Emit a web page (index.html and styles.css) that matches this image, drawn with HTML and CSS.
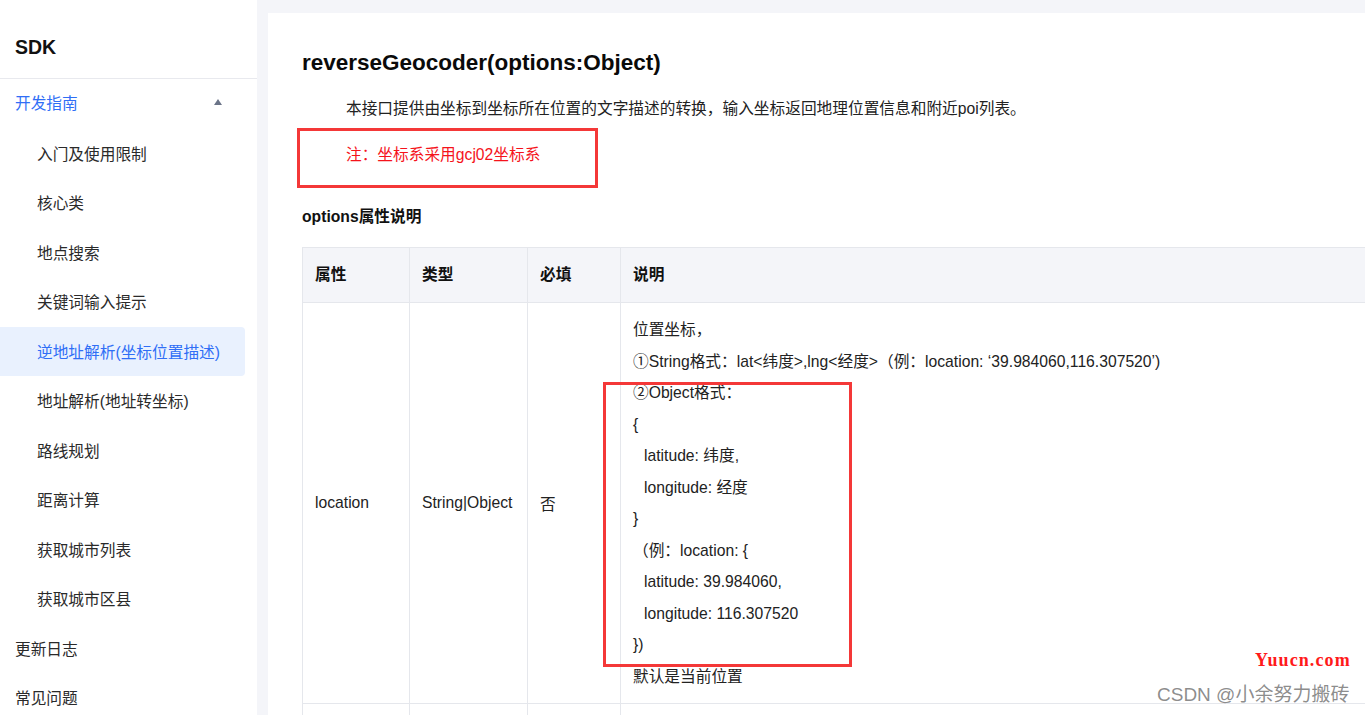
FILE: index.html
```html
<!DOCTYPE html>
<html lang="zh-CN">
<head>
<meta charset="utf-8">
<title>reverseGeocoder</title>
<link rel="stylesheet" href="styles.css">
</head>
<body>
<div class="layout">
  <aside class="sidebar">
    <div class="brand">SDK</div>
    <ul class="menu">
      <li class="item top open"><span>开发指南</span><span class="caret"></span></li>
      <li class="item sub">入门及使用限制</li>
      <li class="item sub">核心类</li>
      <li class="item sub">地点搜索</li>
      <li class="item sub">关键词输入提示</li>
      <li class="item sub active">逆地址解析(坐标位置描述)</li>
      <li class="item sub">地址解析(地址转坐标)</li>
      <li class="item sub">路线规划</li>
      <li class="item sub">距离计算</li>
      <li class="item sub">获取城市列表</li>
      <li class="item sub">获取城市区县</li>
      <li class="item top">更新日志</li>
      <li class="item top">常见问题</li>
    </ul>
  </aside>
  <main class="main">
    <div class="panel">
      <h1 class="title">reverseGeocoder(options:Object)</h1>
      <p class="desc">本接口提供由坐标到坐标所在位置的文字描述的转换，输入坐标返回地理位置信息和附近poi列表。</p>
      <p class="desc note">注：坐标系采用gcj02坐标系</p>
      <h3 class="subtitle">options属性说明</h3>
      <table class="props">
        <colgroup>
          <col class="c1"><col class="c2"><col class="c3"><col class="c4">
        </colgroup>
        <thead>
          <tr><th>属性</th><th>类型</th><th>必填</th><th>说明</th></tr>
        </thead>
        <tbody>
          <tr>
            <td>location</td>
            <td>String|Object</td>
            <td>否</td>
            <td class="detail">
              <div class="ln">位置坐标，</div>
              <div class="ln">①String格式：lat&lt;纬度&gt;,lng&lt;经度&gt;（例：location: ‘39.984060,116.307520’)</div>
              <div class="ln">②Object格式：</div>
              <div class="ln">{</div>
              <div class="ln ind">latitude: 纬度,</div>
              <div class="ln ind">longitude: 经度</div>
              <div class="ln">}</div>
              <div class="ln">（例：location: {</div>
              <div class="ln ind">latitude: 39.984060,</div>
              <div class="ln ind">longitude: 116.307520</div>
              <div class="ln">})</div>
              <div class="ln">默认是当前位置</div>
            </td>
          </tr>
          <tr class="next"><td></td><td></td><td></td><td></td></tr>
        </tbody>
      </table>
    </div>
  </main>
</div>
<div class="mark mark-note"></div>
<div class="mark mark-obj"></div>
<div class="wm-site">Yuucn.com</div>
<div class="wm-csdn">CSDN @小余努力搬砖</div>
</body>
</html>
```

FILE: styles.css
```css
html, body {
  margin: 0;
  padding: 0;
  height: 100%;
  overflow: hidden;
}
body {
  background: #f4f5f9;
  font-family: "Liberation Sans", Arial, "Noto Sans CJK SC", sans-serif;
  font-size: 15.7px;
  color: #222;
  position: relative;
}
.layout {
  display: flex;
  height: 715px;
}
.sidebar {
  width: 257px;
  flex: 0 0 257px;
  background: #fff;
  height: 100%;
}
.brand {
  font-weight: bold;
  font-size: 19.5px;
  line-height: 28px;
  padding: 33px 0 17px 15px;
  color: #111;
  border-bottom: 1px solid #e8e9ee;
  height: 28px;
}
.menu {
  list-style: none;
  margin: 0;
  padding: 0;
}
.item {
  height: 49.5px;
  line-height: 51px;
  width: 245px;
  box-sizing: border-box;
  color: #2a2a2a;
  border-radius: 0 4px 4px 0;
  white-space: nowrap;
}
.item.top { padding-left: 15px; }
.item.sub { padding-left: 37px; }
.item.open {
  color: #2f6ef6;
  display: flex;
  align-items: center;
  justify-content: space-between;
  padding-right: 23px;
}
.caret {
  width: 0;
  height: 0;
  border-left: 4.5px solid transparent;
  border-right: 4.5px solid transparent;
  border-bottom: 6px solid #6b7488;
  margin-top: -3px;
}
.item.active {
  background: #e9f1fe;
  color: #2f6ef6;
}
.main {
  flex: 1;
  padding: 13px 0 0 11px;
  min-width: 0;
}
.panel {
  background: #fff;
  height: 100%;
  padding: 35px 0 0 34px;
  box-sizing: border-box;
  overflow: hidden;
}
.title {
  margin: 0;
  font-size: 22.5px;
  line-height: 30px;
  font-weight: bold;
  color: #0a0a0a;
}
.desc {
  margin: 19px 0 0 0;
  padding-left: 44px;
  line-height: 24px;
  color: #222;
  white-space: nowrap;
}
.note {
  margin-top: 22px;
  color: #f5131b;
}
.subtitle {
  margin: 38px 0 0 0;
  font-size: 15.7px;
  line-height: 24px;
  font-weight: bold;
  color: #111;
}
.props {
  margin-top: 18px;
  border-collapse: collapse;
  width: 1200px;
  table-layout: fixed;
}
.c1 { width: 107px; }
.c2 { width: 118px; }
.c3 { width: 93px; }
.props th, .props td {
  border: 1px solid #e5e7ec;
  padding: 0 12px;
  text-align: left;
  vertical-align: middle;
  white-space: nowrap;
}
.props th {
  background: #f4f5f9;
  height: 54px;
  line-height: 50px;
  font-weight: bold;
  color: #111;
}
.props td.detail {
  padding: 11px 12px 11px 12px;
}
.ln {
  line-height: 31.5px;
}
.ln.ind { padding-left: 11px; }
.props .next td { height: 40px; }
.mark {
  position: absolute;
  border: 3px solid #f43838;
  box-sizing: border-box;
  pointer-events: none;
}
.mark-note {
  left: 297px;
  top: 128px;
  width: 301px;
  height: 60px;
}
.mark-obj {
  left: 603px;
  top: 382px;
  width: 249px;
  height: 285px;
}
.wm-site {
  position: absolute;
  left: 1255px;
  top: 648px;
  font-family: "Liberation Serif", "Times New Roman", serif;
  font-weight: bold;
  font-size: 18px;
  letter-spacing: 1.1px;
  line-height: 24px;
  color: #ff1a1a;
}
.wm-csdn {
  position: absolute;
  left: 1157px;
  top: 683px;
  font-size: 19px;
  line-height: 24px;
  color: rgba(120, 120, 120, 0.85);
  white-space: nowrap;
}
```
